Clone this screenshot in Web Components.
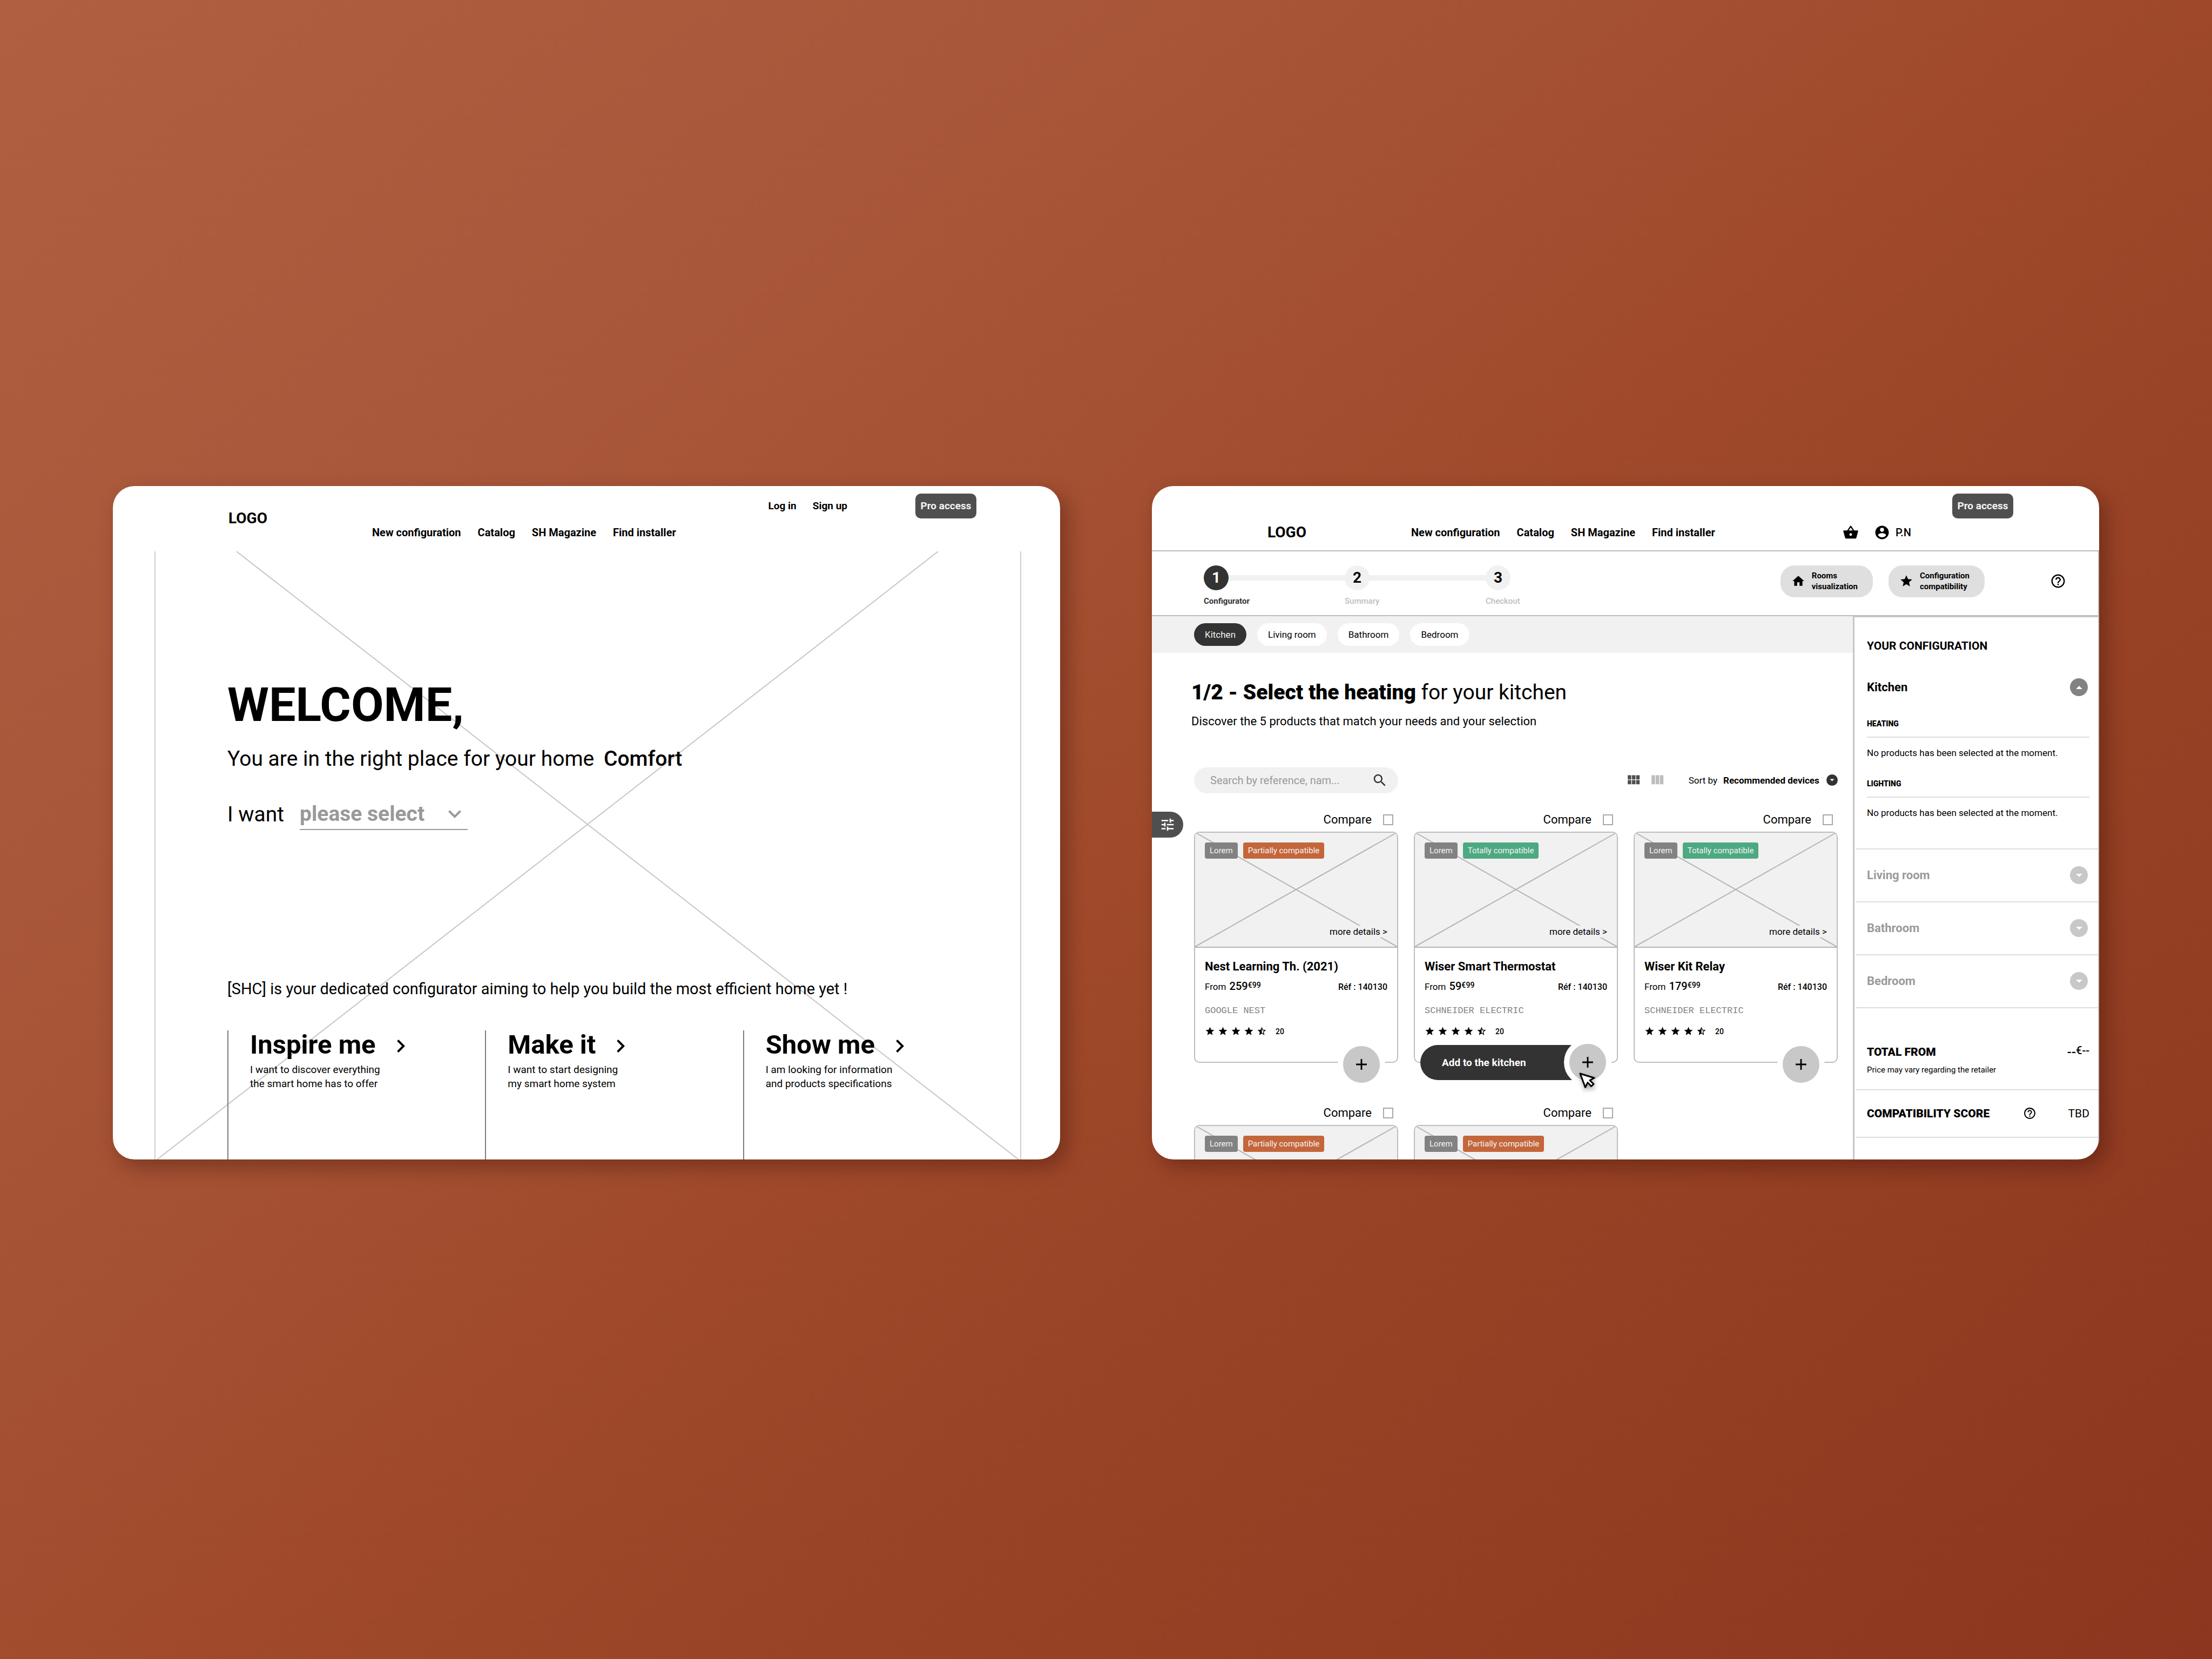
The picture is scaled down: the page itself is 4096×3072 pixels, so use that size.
<!DOCTYPE html>
<html lang="en">
<head>
<meta charset="utf-8">
<title>Smart home configurator</title>
<style>
  html, body { margin: 0; }
  body {
    min-height: 100vh;
    box-sizing: border-box;
    padding: 0 209px 26px;
    display: grid;
    grid-template-columns: 1fr 1fr;
    gap: 170px;
    align-content: center;
    background: linear-gradient(139deg, #b05f40 0%, #a9573a 25%, #a04a2b 51%, #964024 72%, #8c361f 100%);
    font-family: Roboto, "Liberation Sans", sans-serif;
    color: #000;
  }
</style>
</head>
<body>
<wf-window><home-screen></home-screen></wf-window>
<wf-window><config-screen></config-screen></wf-window>

<script>
const RESET = `
  *, *::before, *::after { box-sizing: border-box; }
  h1, h2, h3, h4, p, ul, ol { margin: 0; padding: 0; font-weight: inherit; font-size: inherit; }
  ul, ol { list-style: none; }
  a { color: inherit; text-decoration: none; white-space: nowrap; }
  button, input, select { font: inherit; color: inherit; margin: 0; padding: 0; border: 0; background: none; border-radius: 0; }
`;

function define(name, css, markup) {
  customElements.define(name, class extends HTMLElement {
    constructor() {
      super();
      const root = this.attachShadow({ mode: 'open' });
      root.innerHTML = `<style>${RESET}${css}</style>` +
        (typeof markup === 'function' ? markup(this) : markup);
    }
  });
}

const ICONS = {
  basket: 'M17.21 9l-4.38-6.56c-.19-.28-.51-.42-.83-.42-.32 0-.64.14-.83.43L6.79 9H2c-.55 0-1 .45-1 1 0 .09.01.18.04.27l2.54 9.27c.23.84 1 1.46 1.92 1.46h13c.92 0 1.69-.62 1.93-1.46l2.54-9.27L23 10c0-.55-.45-1-1-1h-4.79zM9 9l3-4.4L15 9H9zm3 8c-1.1 0-2-.9-2-2s.9-2 2-2 2 .9 2 2-.9 2-2 2z',
  account: 'M12 2C6.48 2 2 6.48 2 12s4.48 10 10 10 10-4.48 10-10S17.52 2 12 2zm0 3c1.66 0 3 1.34 3 3s-1.34 3-3 3-3-1.34-3-3 1.34-3 3-3zm0 14.2c-2.5 0-4.71-1.28-6-3.22.03-1.99 4-3.08 6-3.08 1.99 0 5.97 1.09 6 3.08-1.29 1.94-3.5 3.22-6 3.22z',
  home: 'M10 20v-6h4v6h5v-8h3L12 3 2 12h3v8z',
  star: 'M12 17.27L18.18 21l-1.64-7.03L22 9.24l-7.19-.61L12 2 9.19 8.63 2 9.24l5.46 4.73L5.82 21z',
  'star-half': 'M22 9.24l-7.19-.62L12 2 9.19 8.63 2 9.24l5.46 4.73L5.82 21 12 17.27 18.18 21l-1.63-7.03L22 9.24zM12 15.4V6.1l1.71 4.04 4.38.38-3.32 2.88 1 4.28L12 15.4z',
  help: 'M11 18h2v-2h-2v2zm1-16C6.48 2 2 6.48 2 12s4.48 10 10 10 10-4.48 10-10S17.52 2 12 2zm0 18c-4.41 0-8-3.59-8-8s3.59-8 8-8 8 3.59 8 8-3.59 8-8 8zm0-14c-2.21 0-4 1.79-4 4h2c0-1.1.9-2 2-2s2 .9 2 2c0 2-3 1.75-3 5h2c0-2.25 3-2.5 3-5 0-2.21-1.79-4-4-4z',
  search: 'M15.5 14h-.79l-.28-.27C15.41 12.59 16 11.11 16 9.5 16 5.91 13.09 3 9.5 3S3 5.91 3 9.5 5.91 16 9.5 16c1.61 0 3.09-.59 4.23-1.57l.27.28v.79l5 4.99L20.49 19l-4.99-5zm-6 0C7.01 14 5 11.99 5 9.5S7.01 5 9.5 5 14 7.01 14 9.5 11.99 14 9.5 14z',
  tune: 'M3 17v2h6v-2H3zM3 5v2h10V5H3zm10 16v-2h8v-2h-8v-2h-2v6h2zM7 9v2H3v2h4v2h2V9H7zm14 4v-2H11v2h10zm-6-4h2V7h4V5h-4V3h-2v6z',
  grid: 'M4 11h5V5H4v6zm0 7h5v-6H4v6zm6 0h5v-6h-5v6zm6 0h5v-6h-5v6zm-6-7h5V5h-5v6zm6-6v6h5V5h-5z',
  columns: 'M10 18h5V5h-5v13zm-6 0h5V5H4v13zM16 5v13h5V5h-5z',
  plus: 'M19 13h-6v6h-2v-6H5v-2h6V5h2v6h6v2z',
  'chevron-down': 'M16.59 8.59L12 13.17 7.41 8.59 6 10l6 6 6-6z',
  'chevron-right': 'M10 6L8.59 7.41 13.17 12l-4.58 4.59L10 18l6-6z',
  up: 'M7 14.5l5-5 5 5z',
  down: 'M7 9.5l5 5 5-5z'
};

define('wf-icon', `
  :host { display: inline-block; width: var(--size, 24px); height: var(--size, 24px); flex: none; }
  svg { display: block; width: 100%; height: 100%; fill: currentColor; }
`, el => `<svg viewBox="0 0 24 24" aria-hidden="true"><path d="${ICONS[el.getAttribute('name')]}"/></svg>`);

define('wf-window', `
  :host {
    display: flex; flex-direction: column; min-width: 0;
    aspect-ratio: 1754 / 1247; overflow: hidden; border-radius: 40px; background: #fff;
    box-shadow: 12px 14px 36px rgba(40, 10, 0, .34);
  }
`, `<slot></slot>`);

define('site-header', `
  :host { display: block; flex: none; height: 121px; }
  header {
    display: grid; grid-template-columns: 266px 1fr; grid-template-rows: 75px 22px 24px;
    height: 100%; padding-left: 214px; font-size: 19px; font-weight: 700;
  }
  .logo { grid-row: 1 / 4; align-self: center; font-size: 28px; line-height: 32px; }
  .top { grid-area: 1 / 2; display: flex; justify-content: flex-end; align-items: center; gap: 30px; padding-right: 155px; }
  .pro { width: 113px; height: 46px; border-radius: 10px; background: #4f4f4f; color: #f4f4f4; margin-left: 96px; }
  .bottom { grid-area: 2 / 2; display: flex; justify-content: space-between; align-items: center; padding-right: 348px; font-size: 20px; }
  nav { display: flex; gap: 31px; }
  .user { display: flex; align-items: center; gap: 28px; }
  .user a { display: flex; align-items: center; gap: 10px; font-weight: 500; }
  .user, .user a { --size: 30px; }
  :host([signed-in]) header { border-bottom: 2px solid #bdbdbd; }
  :host([signed-in]) .logo { grid-row: 2; }
  :host([signed-in]) .top { padding-right: 159px; }
  .top, .bottom nav { line-height: 22px; }
`, el => {
  const signed = el.hasAttribute('signed-in');
  return `<header>
    <a class="logo" href="#">LOGO</a>
    <div class="top">
      ${signed ? '' : '<a href="#">Log in</a><a href="#">Sign up</a>'}
      <button class="pro">Pro access</button>
    </div>
    <div class="bottom">
      <nav><a href="#">New configuration</a><a href="#">Catalog</a><a href="#">SH Magazine</a><a href="#">Find installer</a></nav>
      ${signed ? '<div class="user"><a href="#" aria-label="Basket"><wf-icon name="basket"></wf-icon></a><a href="#"><wf-icon name="account"></wf-icon>P.N</a></div>' : ''}
    </div>
  </header>`;
});

define('choice-column', `
  :host { display: block; border-left: 2px solid #7d7d7d; padding-left: 40px; }
  h2 { font-size: 49px; line-height: 53px; font-weight: 700; }
  h2 a { display: flex; align-items: center; gap: 22px; height: 53px; }
  wf-icon { --size: 48px; padding-top: 6px; box-sizing: content-box; }
  p { font-size: 19px; line-height: 26px; margin-top: 7px; }
`, `<h2><a href="#"><slot name="title"></slot><wf-icon name="chevron-right"></wf-icon></a></h2><p><slot></slot></p>`);

define('home-screen', `
  :host { display: flex; flex-direction: column; flex: 1; min-height: 0; }
  main { flex: 1; display: grid; min-height: 0; grid-template-rows: 100%; }
  .frame, .content { grid-area: 1 / 1; }
  .frame { margin: 0 72px 0 77px; border: solid #cfcfcf; border-width: 0 2px; min-height: 0; }
  .frame svg { display: block; width: 100%; height: 100%; }
  .frame line { stroke: #c6c6c6; stroke-width: 2px; vector-effect: non-scaling-stroke; }
  .content { display: flex; flex-direction: column; padding: 234px 110px 0 212px; }
  h1 { font-size: 88px; line-height: 100px; font-weight: 700; }
  .lead { font-size: 39px; line-height: 60px; margin-top: 20px; }
  .lead strong { font-weight: 500; margin-left: 8px; }
  .want { display: flex; align-items: center; gap: 29px; margin-top: 45px; height: 57px; font-size: 39px; }
  .pick { position: relative; width: 311px; height: 100%; color: #999; }
  select { width: 100%; height: 100%; appearance: none; border-bottom: 2px solid #999; font-weight: 700; line-height: 55px; opacity: 1; }
  .pick wf-icon { --size: 48px; position: absolute; right: 0; top: 3px; pointer-events: none; }
  .about { margin-top: 274px; font-size: 29px; line-height: 40px; }
  .choices { flex: 1; display: grid; grid-template-columns: repeat(3, 1fr); margin-top: 57px; }
`, `
  <site-header></site-header>
  <main>
    <div class="frame"><svg viewBox="0 0 1603 1127" preserveAspectRatio="none" aria-hidden="true">
      <line x1="150" y1="0" x2="1600" y2="1127"/><line x1="1451" y1="0" x2="3" y2="1127"/></svg></div>
    <div class="content">
      <h1>WELCOME,</h1>
      <p class="lead">You are in the right place for your home <strong>Comfort</strong></p>
      <div class="want">
        <label for="want">I want</label>
        <div class="pick"><select id="want"><option>please select</option></select><wf-icon name="chevron-down"></wf-icon></div>
      </div>
      <p class="about">[SHC] is your dedicated configurator aiming to help you build the most efficient home yet !</p>
      <div class="choices">
        <choice-column><span slot="title">Inspire me</span>I want to discover everything<br>the smart home has to offer</choice-column>
        <choice-column><span slot="title">Make it</span>I want to start designing<br>my smart home system</choice-column>
        <choice-column><span slot="title">Show me</span>I am looking for information<br>and products specifications</choice-column>
      </div>
    </div>
  </main>`);

define('step-bar', `
  :host { display: block; flex: none; height: 120px; }
  .bar { display: flex; height: 100%; padding: 26px 59px 0 96px; border: solid #bdbdbd; border-width: 0 2px 2px 0; align-items: flex-start; }
  ol { display: flex; margin-right: auto; }
  li { display: grid; grid-template-columns: 46px 1fr; align-items: center; width: 261px; row-gap: 11px; color: #bdbdbd; }
  li:last-child { width: auto; }
  .num { width: 46px; height: 46px; border-radius: 50%; background: #f1f1f1; color: #000; display: grid; place-items: center; font-size: 28px; font-weight: 700; line-height: 46px; }
  .track { height: 10px; background: #f1f1f1; margin: 0 -2px; }
  .name { grid-column: 1 / 3; font-size: 15px; line-height: 18px; font-weight: 500; }
  .now .num { position: relative; background: #333; color: #fff; }
  .now .name { color: #333; font-weight: 700; }
  button { display: flex; align-items: center; gap: 12px; height: 59px; padding: 0 28px 0 20px; margin-right: 29px; border-radius: 26px; background: #dfdfdf; font-size: 15px; line-height: 20px; font-weight: 700; text-align: left; }
  button wf-icon { --size: 26px; }
  .help { display: flex; align-items: center; height: 59px; margin-left: 92px; --size: 30px; }
`, `
  <div class="bar">
    <ol>
      <li class="now"><span class="num">1</span><span class="track"></span><span class="name">Configurator</span></li>
      <li><span class="num">2</span><span class="track"></span><span class="name">Summary</span></li>
      <li><span class="num">3</span><span></span><span class="name">Checkout</span></li>
    </ol>
    <button><wf-icon name="home"></wf-icon><span>Rooms<br>visualization</span></button>
    <button><wf-icon name="star"></wf-icon><span>Configuration<br>compatibility</span></button>
    <a class="help" href="#" aria-label="Help"><wf-icon name="help"></wf-icon></a>
  </div>`);

define('product-card', `
  :host { display: block; }
  .compare { display: flex; justify-content: flex-end; align-items: center; gap: 21px; height: 28px; padding-right: 9px; font-size: 22px; }
  .compare input { appearance: none; width: 19px; height: 20px; border: 2px solid #a8a8a8; }
  article { position: relative; margin-top: 8px; height: 428px; border: 2px solid #bdbdbd; border-radius: 10px; }
  .image { display: grid; height: 213px; background: #f1f1f1; border-bottom: 2px solid #b4b4b4; border-radius: 8px 8px 0 0; overflow: hidden; grid-template-rows: 100%; }
  .image svg, .over { grid-area: 1 / 1; min-height: 0; width: 100%; height: 100%; }
  .image line { stroke: #b4b4b4; stroke-width: 2px; vector-effect: non-scaling-stroke; }
  .over { display: flex; flex-direction: column; justify-content: space-between; padding: 18px 12px 17px 18px; }
  .tags { display: flex; gap: 10px; }
  .tags span { padding: 0 9px; border-radius: 4px; background: #828282; color: #f4f4f4; font-size: 15px; line-height: 30px; }
  .tags .partial { background: #c4663b; }
  .tags .total { background: #4da981; }
  .more { align-self: flex-end; padding: 0 6px; background: #f1f1f1; font-size: 17px; line-height: 22px; }
  .info { padding: 21px 18px 0; }
  h3 { font-size: 22px; line-height: 28px; font-weight: 700; }
  .row { display: flex; justify-content: space-between; align-items: baseline; margin-top: 10px; height: 24px; line-height: 24px; font-size: 17px; }
  .row b { font-weight: 500; }
  .row > b { font-size: 16px; }
  .price b { font-size: 20px; margin-left: 2px; }
  .price sup { font-weight: 500; line-height: 0; vertical-align: 4px; }
  .brand { margin-top: 24px; font: 17px/20px "Liberation Mono", monospace; color: #828282; }
  .stars { display: flex; align-items: center; gap: 5px; height: 20px; margin-top: 18px; font-size: 14px; font-weight: 500; --size: 19px; }
  .stars span { margin-left: 11px; }
  .plus { position: absolute; right: 22px; bottom: -49px; width: 88px; height: 88px; border: 10px solid #fff; border-radius: 50%; background: #c8c8c8; display: grid; place-items: center; --size: 34px; }
  .add { position: absolute; left: 10px; right: 54px; bottom: -34px; height: 65px; padding-left: 40px; border-radius: 33px 0 0 33px; background: #333; color: #fff; font-size: 19px; font-weight: 700; text-align: left; }
  .add + .plus { right: 10px; bottom: -45px; }
  .cursor { position: absolute; right: 38px; bottom: -52px; width: 32px; height: 32px; overflow: visible; filter: drop-shadow(1px 5px 4px rgba(0, 0, 0, .35)); }
`, el => {
  const total = el.hasAttribute('total');
  const peek = el.hasAttribute('peek');
  const active = el.hasAttribute('active');
  return `
  <label class="compare">Compare<input type="checkbox"></label>
  <article>
    <div class="image">
      <svg viewBox="0 0 374 211" preserveAspectRatio="none" aria-hidden="true"><line x1="3" y1="1" x2="374" y2="211"/><line x1="371" y1="1" x2="0" y2="211"/></svg>
      <div class="over">
        <div class="tags"><span>Lorem</span><span class="${total ? 'total' : 'partial'}">${total ? 'Totally compatible' : 'Partially compatible'}</span></div>
        ${peek ? '' : '<a class="more" href="#">more details &gt;</a>'}
      </div>
    </div>
    ${peek ? '' : `<div class="info">
      <h3>${el.getAttribute('name')}</h3>
      <div class="row"><span class="price">From <b>${el.getAttribute('price')}</b><sup>€99</sup></span><b>Réf : 140130</b></div>
      <p class="brand">${el.getAttribute('brand')}</p>
      <div class="stars"><wf-icon name="star"></wf-icon><wf-icon name="star"></wf-icon><wf-icon name="star"></wf-icon><wf-icon name="star"></wf-icon><wf-icon name="star-half"></wf-icon><span>20</span></div>
    </div>
    ${active ? '<button class="add">Add to the kitchen</button>' : ''}
    <button class="plus" aria-label="Add"><wf-icon name="plus"></wf-icon></button>
    ${active ? '<svg class="cursor" viewBox="0 0 32 32" aria-hidden="true"><path d="M2 2 L28 10 L20 14.5 L27 21.5 L22.5 25.5 L16 18.5 L11.5 27.5 Z" fill="#fff" stroke="#000" stroke-width="3" stroke-linejoin="round"/></svg>' : ''}`}
  </article>`;
});

define('room-row', `
  :host { display: flex; align-items: center; justify-content: space-between; height: 98px; padding: 0 19px 0 21px; border-top: 2px solid #dedede; color: #9a9a9a; font-size: 22px; font-weight: 700; }
  :host([open]) { height: 34px; border-top: 0; color: #000; }
  button { width: 33px; height: 33px; border-radius: 50%; background: #c8c8c8; color: #fff; display: grid; place-items: center; --size: 28px; }
  :host([open]) button { background: #828282; }
`, el => `<slot></slot><button aria-label="Toggle"><wf-icon name="${el.hasAttribute('open') ? 'up' : 'down'}"></wf-icon></button>`);

define('config-panel', `
  :host { display: block; }
  aside { height: 100%; border: solid #c6c6c6; border-width: 2px 2px 0 3px; padding: 39px 0 0 2px; }
  h2, .group, .total { padding: 0 16px 0 21px; }
  h2 { font-size: 21px; line-height: 28px; font-weight: 700; }
  .open { margin-top: 46px; }
  .group { margin-top: 40px; }
  .group h4 { padding-bottom: 14px; border-bottom: 2px solid #dedede; font-size: 14px; line-height: 20px; font-weight: 900; }
  .group p { margin-top: 17px; font-size: 17px; line-height: 22px; }
  .group + .group { margin-top: 36px; }
  .rooms { margin-top: 55px; border-bottom: 2px solid #dedede; }
  .total { padding-top: 68px; padding-bottom: 26px; }
  .line { display: flex; align-items: center; justify-content: space-between; line-height: 26px; font-size: 21px; }
  .line h3 { font-weight: 900; }
  .line b { font-size: 24px; font-weight: 500; }
  .line sup { font-size: 20px; line-height: 0; vertical-align: 4px; font-weight: 500; }
  .total p { margin-top: 9px; font-size: 15px; line-height: 20px; }
  .score { height: 90px; padding: 0 16px 0 21px; border: solid #dedede; border-width: 2px 0; }
  .score wf-icon { --size: 25px; margin-left: auto; margin-right: 59px; }
`, `
  <aside>
    <h2>YOUR CONFIGURATION</h2>
    <room-row class="open" open>Kitchen</room-row>
    <div class="group"><h4>HEATING</h4><p>No products has been selected at the moment.</p></div>
    <div class="group"><h4>LIGHTING</h4><p>No products has been selected at the moment.</p></div>
    <div class="rooms"><room-row>Living room</room-row><room-row>Bathroom</room-row><room-row>Bedroom</room-row></div>
    <div class="total"><div class="line"><h3>TOTAL FROM</h3><span><b>--</b><sup>€--</sup></span></div><p>Price may vary regarding the retailer</p></div>
    <div class="line score"><h3>COMPATIBILITY SCORE</h3><wf-icon name="help"></wf-icon><span>TBD</span></div>
  </aside>`);

define('config-screen', `
  :host { display: flex; flex-direction: column; flex: 1; min-height: 0; position: relative; }
  .body { flex: 1; min-height: 0; display: grid; grid-template-columns: 1fr 456px; }
  .chips { display: flex; align-items: center; gap: 20px; height: 68px; padding-left: 78px; background: #f1f1f1; }
  .chips button { height: 42px; padding: 0 20px; border-radius: 21px; background: #fff; font-size: 17px; }
  .chips .on { background: #333; color: #f1f1f1; }
  .head { padding: 49px 0 0 73px; }
  h1 { font-size: 39px; line-height: 48px; }
  h1 b { font-weight: 900; }
  .head p { margin-top: 16px; font-size: 22px; line-height: 28px; }
  .tools { display: flex; align-items: center; margin: 71px 28px 0 78px; height: 48px; font-size: 17px; }
  .search { display: flex; align-items: center; width: 378px; height: 48px; padding: 0 19px 0 30px; border-radius: 24px; background: #f1f1f1; margin-right: auto; --size: 30px; color: #333; }
  .search input { flex: 1; min-width: 0; outline: 0; font-size: 20px; }
  .search input::placeholder { color: #999; opacity: 1; }
  .view { --size: 31px; display: block; height: 31px; color: #4f4f4f; margin-right: 13px; }
  .view.off { color: #bdbdbd; margin-right: 43px; }
  .tools label { margin-right: 11px; }
  .tools select { appearance: none; font-weight: 700; margin-right: 13px; }
  .dot { width: 21px; height: 21px; border-radius: 50%; background: #333; color: #fff; display: grid; place-items: center; --size: 19px; }
  .grid { display: grid; grid-template-columns: repeat(3, 1fr); gap: 79px 29px; margin: 35px 28px 0 78px; }
  .filter { position: absolute; left: 0; top: 603px; width: 58px; height: 48px; border-radius: 0 24px 24px 0; background: #4f4f4f; color: #fff; display: grid; place-items: center; --size: 30px; }
`, `
  <site-header signed-in></site-header>
  <step-bar></step-bar>
  <div class="body">
    <main>
      <div class="chips"><button class="on">Kitchen</button><button>Living room</button><button>Bathroom</button><button>Bedroom</button></div>
      <div class="head">
        <h1><b>1/2 - Select the heating</b> for your kitchen</h1>
        <p>Discover the 5 products that match your needs and your selection</p>
      </div>
      <div class="tools">
        <div class="search"><input type="search" aria-label="Search products" placeholder="Search by reference, nam..."><wf-icon name="search"></wf-icon></div>
        <button class="view" aria-label="Grid view"><wf-icon name="grid"></wf-icon></button>
        <button class="view off" aria-label="Column view"><wf-icon name="columns"></wf-icon></button>
        <label for="sort">Sort by</label><select id="sort"><option>Recommended devices</option></select>
        <span class="dot"><wf-icon name="down"></wf-icon></span>
      </div>
      <div class="grid">
        <product-card name="Nest Learning Th. (2021)" price="259" brand="GOOGLE NEST"></product-card>
        <product-card name="Wiser Smart Thermostat" price="59" brand="SCHNEIDER ELECTRIC" total active></product-card>
        <product-card name="Wiser Kit Relay" price="179" brand="SCHNEIDER ELECTRIC" total></product-card>
        <product-card peek></product-card>
        <product-card peek></product-card>
      </div>
    </main>
    <config-panel></config-panel>
  </div>
  <button class="filter" aria-label="Filters"><wf-icon name="tune"></wf-icon></button>`);
</script>
</body>
</html>
